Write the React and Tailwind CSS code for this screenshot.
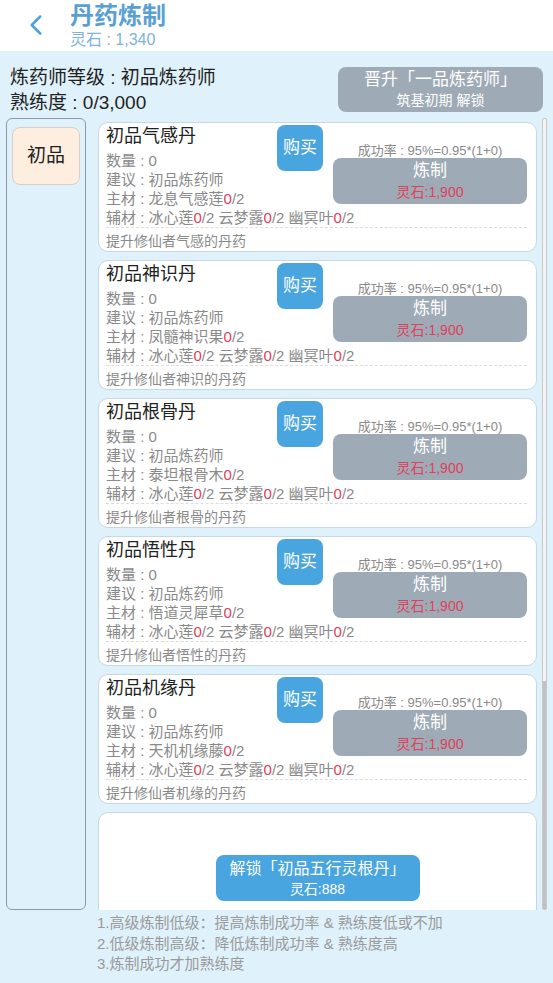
import { ChevronLeft } from "lucide-react";

const FONT = { fontFamily: '"Liberation Sans", "Noto Sans CJK SC", sans-serif' };

const pills = [
  { name: "初品气感丹", main: "龙息气感莲", desc: "提升修仙者气感的丹药" },
  { name: "初品神识丹", main: "凤髓神识果", desc: "提升修仙者神识的丹药" },
  { name: "初品根骨丹", main: "泰坦根骨木", desc: "提升修仙者根骨的丹药" },
  { name: "初品悟性丹", main: "悟道灵犀草", desc: "提升修仙者悟性的丹药" },
  { name: "初品机缘丹", main: "天机机缘藤", desc: "提升修仙者机缘的丹药" },
];

const Red = ({ children }) => <span className="text-[#e0405a]">{children}</span>;

const PillCard = ({ pill }) => (
  <div className="shrink-0 bg-white border border-[#c9d7e0] rounded-[10px] pl-[7px] pr-[9px] h-[130px]">
    <div className="flex">
      <div className="w-[171px] pt-[1px]">
        <div className="text-[18px] leading-[24px] text-[#222]">{pill.name}</div>
        <div className="mt-[3px] text-[15px] leading-[19px] text-[#8a8a8a]">
          <div>数量 : 0</div>
          <div>建议 : 初品炼药师</div>
          <div>
            主材 : {pill.main}
            <Red>0</Red>/2
          </div>
        </div>
      </div>
      <button className="mt-[2px] w-[46px] h-[46px] rounded-[8px] bg-[#48a5df] text-white text-[17px]">
        购买
      </button>
      <div className="flex-1 ml-[10px] pt-[20px]">
        <div className="text-center text-[13px] leading-[15px] text-[#8a8a8a] whitespace-nowrap">
          成功率 : 95%=0.95*(1+0)
        </div>
        <div className="h-[46px] rounded-[8px] bg-[#9eabb6] flex flex-col items-center justify-center">
          <div className="text-white text-[17px] leading-[20px]">炼制</div>
          <div className="text-[#e0405a] text-[14px] leading-[18px] mt-[2px]">灵石:1,900</div>
        </div>
      </div>
    </div>
    <div className="text-[15px] leading-[19px] text-[#8a8a8a] whitespace-nowrap">
      辅材 : 冰心莲<Red>0</Red>/2 云梦露<Red>0</Red>/2 幽冥叶<Red>0</Red>/2
    </div>
    <div className="border-t border-dashed border-[#dcdcdc] pt-[4px] text-[14px] leading-[18px] text-[#8a8a8a]">
      {pill.desc}
    </div>
  </div>
);

export default function App() {
  return (
    <div className="w-[553px] h-[983px] bg-[#dff1fa] overflow-hidden" style={FONT}>
      {/* Header */}
      <div className="h-[51px] bg-white flex">
        <div className="w-[68px] flex items-start justify-center pt-[8px]">
          <ChevronLeft className="w-[34px] h-[34px] text-[#4aa3df] ml-[4px]" strokeWidth={1.8} />
        </div>
        <div className="pl-[2px]">
          <div className="text-[24px] leading-[30px] text-[#5a9fd4] font-bold pt-[1px]">丹药炼制</div>
          <div className="text-[16px] leading-[18px] text-[#7fb3de]">灵石 : 1,340</div>
        </div>
      </div>

      {/* Level */}
      <div className="h-[67px] flex pl-[10px] pr-[10px] pt-[16px]">
        <div className="flex-1 text-[19px] leading-[25px] text-[#222]">
          <div className="-mt-[2px]">炼药师等级 : 初品炼药师</div>
          <div>熟练度 : 0/3,000</div>
        </div>
        <button className="w-[205px] h-[45px] rounded-[8px] bg-[#9eabb6] flex flex-col items-center justify-center">
          <div className="text-white text-[17px] leading-[20px]">晋升「一品炼药师」</div>
          <div className="text-white text-[14px] leading-[17px] mt-[2px]">筑基初期 解锁</div>
        </button>
      </div>

      {/* Main */}
      <div className="flex h-[792px] pl-[6px]">
        <div className="w-[80px] border-[1.5px] border-[#8e9ba7] rounded-[6px] px-[5px] pt-[8px]">
          <div className="h-[58px] rounded-[8px] bg-[#fdeee0] border border-[#d8d0c8] flex items-center justify-center text-[19px] text-[#222]">
            初品
          </div>
        </div>
        <div className="ml-[12px] w-[439px] h-full overflow-hidden flex flex-col gap-[8px] pt-[4px]">
          {pills.map((p) => (
            <PillCard key={p.name} pill={p} />
          ))}
          <div className="shrink-0 bg-white border border-[#c9d7e0] rounded-[10px] h-[130px] pt-[42px] flex justify-center">
            <button className="w-[204px] h-[46px] rounded-[8px] bg-[#48a5df] flex flex-col items-center justify-center">
              <div className="text-white text-[16px] leading-[20px]">解锁「初品五行灵根丹」</div>
              <div className="text-white text-[14px] leading-[17px] mt-[2px]">灵石:888</div>
            </button>
          </div>
        </div>
        <div className="ml-[5px] w-[5px] h-full border border-[#c8c8c8] rounded-[2px] bg-[#f4f4f4] flex flex-col justify-end">
          <div className="h-[228px] bg-[#c1c1c1]" />
        </div>
      </div>

      {/* Notes */}
      <div className="pl-[97px] pt-[3px] text-[15px] leading-[20.5px] text-[#9a9a9a]">
        <div>1.高级炼制低级：提高炼制成功率 &amp; 熟练度低或不加</div>
        <div>2.低级炼制高级：降低炼制成功率 &amp; 熟练度高</div>
        <div>3.炼制成功才加熟练度</div>
      </div>
    </div>
  );
}
